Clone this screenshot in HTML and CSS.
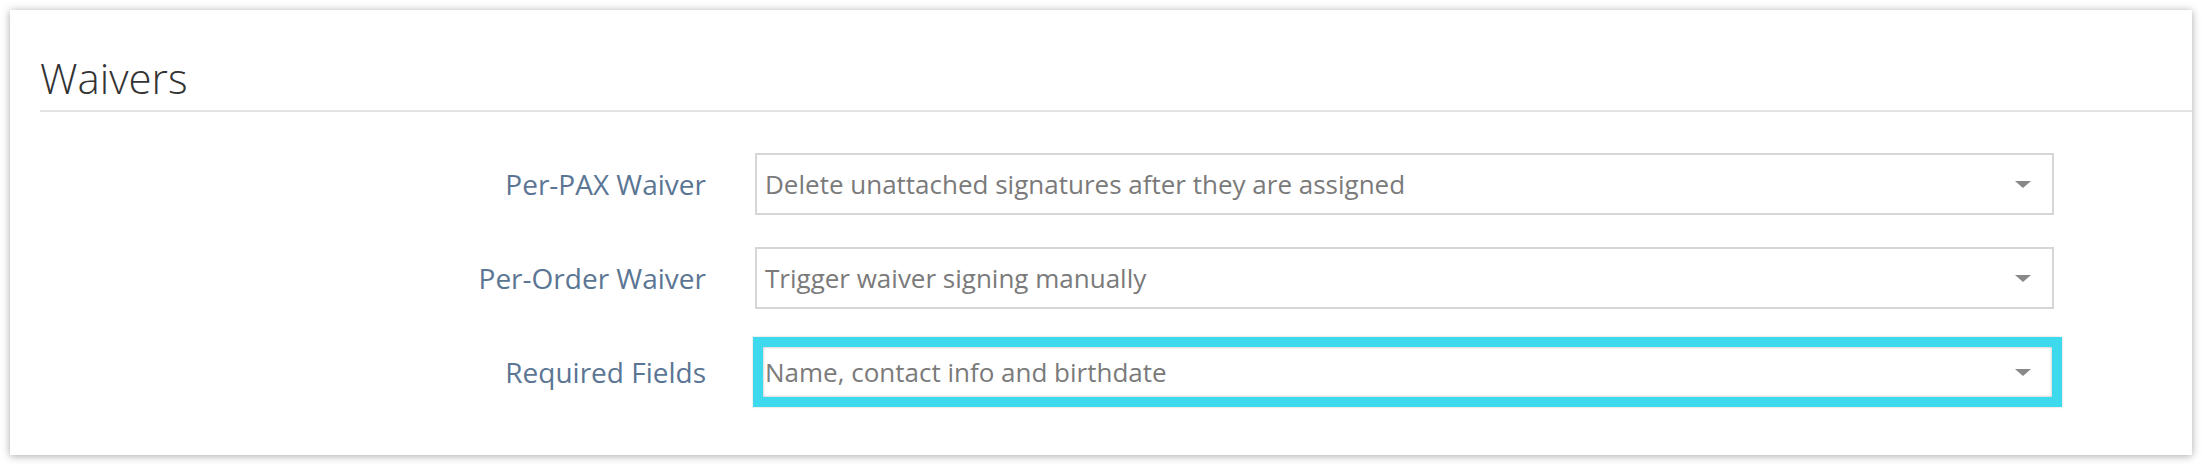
FILE: index.html
```html
<!DOCTYPE html>
<html lang="en">
<head>
    <meta charset="UTF-8">
    <title>Waivers</title>
    <link rel="stylesheet" href="styles.css">
</head>
<body>
    <div class="card">
        <div class="card-header">
            <h1>Waivers</h1>
        </div>
        <div class="form">
            <label class="form-label">Per-PAX Waiver</label>
            <div class="field">
                <div class="select">
                    <span>Delete unattached signatures after they are assigned</span>
                    <span class="caret"></span>
                </div>
            </div>

            <label class="form-label">Per-Order Waiver</label>
            <div class="field">
                <div class="select">
                    <span>Trigger waiver signing manually</span>
                    <span class="caret"></span>
                </div>
            </div>

            <label class="form-label">Required Fields</label>
            <div class="field">
                <div class="select">
                    <span>Name, contact info and birthdate</span>
                    <span class="caret"></span>
                </div>
                <span class="highlight"></span>
            </div>
        </div>
    </div>
</body>
</html>
```

FILE: styles.css
```css
body {
    margin: 0;
    padding: 10px;
    background-color: #ffffff;
    font-family: 'Open Sans', sans-serif;
}
.card {
    background-color: #ffffff;
    box-shadow: 0 1px 8px rgba(0, 0, 0, 0.35);
    padding-bottom: 52px;
}
.card-header {
    margin-left: 30px;
    padding-top: 43px;
    padding-bottom: 8px;
    border-bottom: 2px solid #e3e3e3;
}
.card-header h1 {
    margin: 0;
    font-size: 42px;
    line-height: 49px;
    font-weight: 300;
    color: #333333;
}
.form {
    display: grid;
    grid-template-columns: 696px 1299px;
    column-gap: 49px;
    row-gap: 32px;
    align-items: center;
    margin-top: 41px;
}
.form-label {
    text-align: right;
    font-size: 28px;
    color: #5b7694;
}
.field {
    position: relative;
}
.select {
    display: flex;
    align-items: center;
    justify-content: space-between;
    box-sizing: border-box;
    height: 62px;
    padding: 0 21px 0 8px;
    border: 2px solid #d6d6d6;
    font-size: 26px;
    color: #7a7a7a;
}
.caret {
    width: 0;
    height: 0;
    border-left: 8px solid transparent;
    border-right: 8px solid transparent;
    border-top: 7px solid #888888;
}
.highlight {
    position: absolute;
    top: -4px;
    bottom: -4px;
    left: -2px;
    right: -8px;
    border: 10px solid #3ddaee;
    box-shadow: inset 0 0 3px rgba(0, 0, 0, 0.3), 0 0 2px rgba(0, 0, 0, 0.2);
}
```
